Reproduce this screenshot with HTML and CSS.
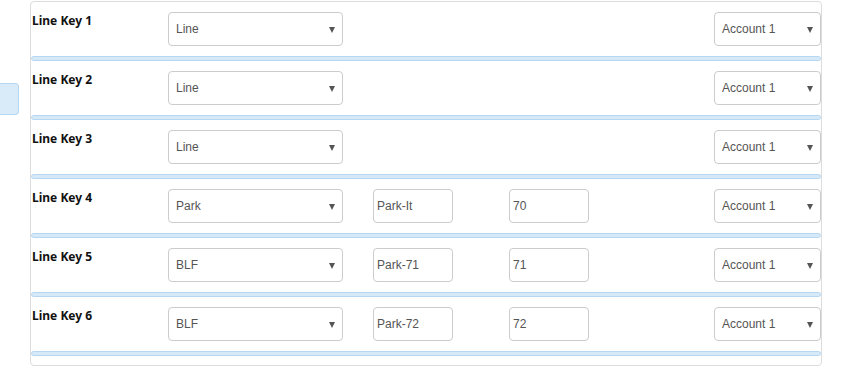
FILE: index.html
```html
<!DOCTYPE html>
<html lang="en">
<head>
    <meta charset="UTF-8">
    <title>Line Keys</title>
    <link rel="stylesheet" href="styles.css">
</head>
<body>
    <div class="page">
        <div class="side">
            <div class="side-tab"></div>
        </div>

        <div class="panel">
            <div class="key-row">
                <label class="key-label">Line Key 1</label>
                <div class="select-wrap type"><select><option>Line</option></select></div>
                <div class="select-wrap account"><select><option>Account 1</option></select></div>
            </div>
            <div class="sep"></div>

            <div class="key-row">
                <label class="key-label">Line Key 2</label>
                <div class="select-wrap type"><select><option>Line</option></select></div>
                <div class="select-wrap account"><select><option>Account 1</option></select></div>
            </div>
            <div class="sep"></div>

            <div class="key-row">
                <label class="key-label">Line Key 3</label>
                <div class="select-wrap type"><select><option>Line</option></select></div>
                <div class="select-wrap account"><select><option>Account 1</option></select></div>
            </div>
            <div class="sep"></div>

            <div class="key-row">
                <label class="key-label">Line Key 4</label>
                <div class="select-wrap type"><select><option>Park</option></select></div>
                <input class="field name" type="text" value="Park-It">
                <input class="field value" type="text" value="70">
                <div class="select-wrap account"><select><option>Account 1</option></select></div>
            </div>
            <div class="sep"></div>

            <div class="key-row">
                <label class="key-label">Line Key 5</label>
                <div class="select-wrap type"><select><option>BLF</option></select></div>
                <input class="field name" type="text" value="Park-71">
                <input class="field value" type="text" value="71">
                <div class="select-wrap account"><select><option>Account 1</option></select></div>
            </div>
            <div class="sep"></div>

            <div class="key-row">
                <label class="key-label">Line Key 6</label>
                <div class="select-wrap type"><select><option>BLF</option></select></div>
                <input class="field name" type="text" value="Park-72">
                <input class="field value" type="text" value="72">
                <div class="select-wrap account"><select><option>Account 1</option></select></div>
            </div>
            <div class="sep"></div>
        </div>
    </div>
</body>
</html>
```

FILE: styles.css
```css
* {
    margin: 0;
    padding: 0;
    box-sizing: border-box;
}

body {
    background: #fff;
    font-family: "Liberation Sans", Arial, sans-serif;
}

.page {
    display: flex;
    align-items: flex-start;
    padding-top: 1px;
}

.side {
    width: 30px;
    padding-top: 82px;
}

.side-tab {
    width: 19px;
    height: 32px;
    background-color: #d9eaf9;
    border: 1px solid #b8d7f1;
    border-left: none;
    border-radius: 0 4px 4px 0;
}

.panel {
    width: 792px;
    border: 1px solid #dcdcdc;
    border-radius: 4px;
    padding-bottom: 9px;
}

.key-row {
    display: flex;
    align-items: flex-start;
    height: 54px;
    padding: 10px 0 0 1px;
}

.key-label {
    width: 136px;
    padding-top: 1px;
    font-family: "Noto Sans", "Liberation Sans", sans-serif;
    font-size: 12px;
    font-weight: bold;
    line-height: 16px;
    color: #111;
}

.select-wrap {
    position: relative;
    height: 34px;
}

.select-wrap select {
    appearance: none;
    -webkit-appearance: none;
    width: 100%;
    height: 100%;
    padding: 0 20px 0 7px;
    border: 1px solid #cccccc;
    border-radius: 4px;
    background: #fff;
    font-family: "Liberation Sans", Arial, sans-serif;
    font-size: 12px;
    color: #555;
    outline: none;
}

/* little triangle in place of the native arrow */
.select-wrap::after {
    content: '';
    position: absolute;
    right: 8px;
    top: 15px;
    border-left: 3px solid transparent;
    border-right: 3px solid transparent;
    border-top: 6px solid #555;
    pointer-events: none;
}

.select-wrap.type {
    width: 175px;
}

.select-wrap.account {
    width: 107px;
    margin-left: auto;
}

.field {
    width: 80px;
    height: 34px;
    padding: 0 3px;
    border: 1px solid #cccccc;
    border-radius: 4px;
    font-family: "Liberation Sans", Arial, sans-serif;
    font-size: 12px;
    color: #555;
    outline: none;
}

.field.name {
    margin-left: 30px;
}

.field.value {
    margin-left: 56px;
}

.sep {
    height: 5px;
    background-color: #d6e9f9;
    border: 1px solid #b6d6f1;
    border-radius: 3px;
}
```
